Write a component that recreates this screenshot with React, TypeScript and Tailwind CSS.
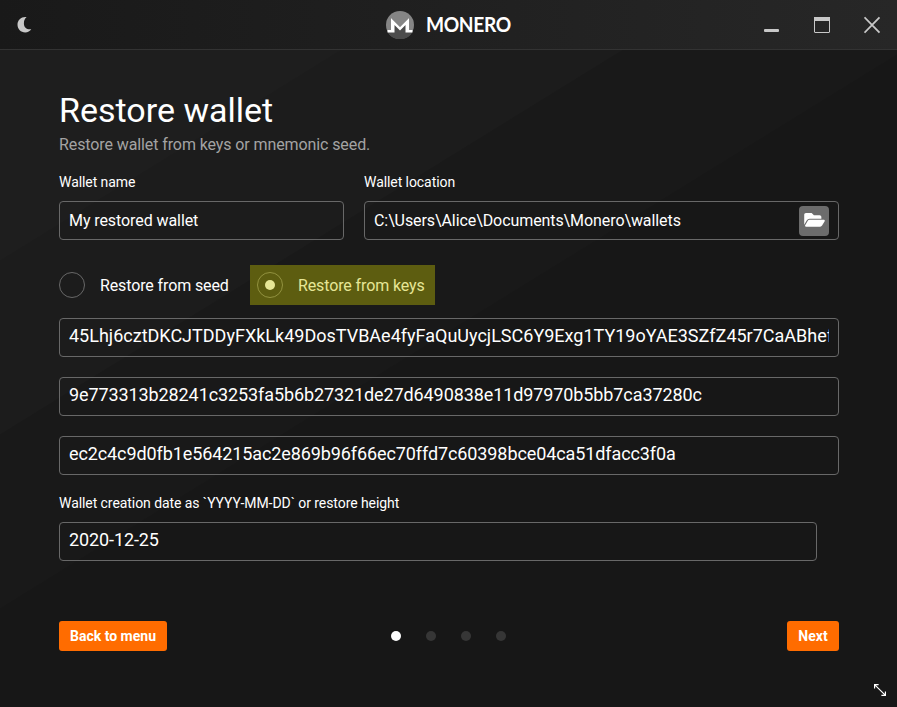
import type { ReactNode } from "react";

function Field({ children, className = "" }: { children: ReactNode; className?: string }) {
  return (
    <div className={`flex h-[39px] items-center rounded-[4px] border border-[#686868] px-[9px] text-white ${className}`}>
      {children}
    </div>
  );
}

function KeyField({ value, className = "", tracking = "tracking-[-0.1px]" }: { value: string; className?: string; tracking?: string }) {
  return (
    <Field className={className}>
      <span className={`block w-full overflow-hidden pb-[3px] text-[18px] leading-[24px] whitespace-nowrap ${tracking}`}>{value}</span>
    </Field>
  );
}

function Label({ children }: { children: ReactNode }) {
  return <div className="text-[14px] leading-5 tracking-[-0.07px] text-white">{children}</div>;
}

function TitleBar() {
  return (
    <header className="flex h-[50px] shrink-0 items-center justify-between border-b border-[#333333] bg-linear-to-r from-[#191919] via-[#202020] to-[#272727]">
      <div className="flex w-[300px] pl-[17px]">
        <svg width="16" height="17" viewBox="0 0 16 17" fill="#c8c8c8">
          <path d="M9.600 1.100C4.500 0.400 0.500 4 0.500 8.700c0 4.400 3.400 7.700 7.700 7.700 2.600 0 4.800-1.200 6.100-3.200C10 13.900 6.900 11.500 6.900 7.400 6.900 4.600 7.800 2.600 9.600 1.100z" />
        </svg>
      </div>
      <div className="flex items-center">
        <svg width="28" height="28" viewBox="0 0 28 28" className="ml-[1px]">
          <circle cx="14" cy="14" r="14" fill="#858585" />
          <path d="M1.700 21h24.600A14 14 0 0 1 1.700 21z" fill="#4c4c4c" />
          <path d="M5 21V7l9 9 9-9v14z" fill="#4c4c4c" />
          <path d="M1.500 21.500V19H5V7l9 9 9-9v12h3.500v2.500h-7V14L14 19.500 8.500 14v7.500z" fill="#ffffff" />
        </svg>
        <span className="mb-[1px] ml-[12px] w-[86px] origin-left scale-x-[0.935] font-['Lato'] text-[20.500px] leading-[28px] font-bold tracking-[-0.4px] text-white">MONERO</span>
      </div>
      <div className="flex w-[300px] items-center justify-end gap-[33px] pr-[16px]">
        <svg width="16" height="18" viewBox="0 0 16 18">
          <rect x="0" y="13" width="15" height="3" rx="1" fill="#c8c8c8" />
        </svg>
        <svg width="18" height="18" viewBox="0 0 18 18">
          <rect x="1.500" y="1.500" width="15" height="15" rx="0.500" fill="none" stroke="#c8c8c8" />
          <path d="M1 1h16v4H1z" fill="#c8c8c8" />
        </svg>
        <svg width="17" height="18" viewBox="0 0 17 18" stroke="#c8c8c8" strokeWidth="1.800">
          <path d="M0.500 1.300l15 15.400M15.500 1.300L0.500 16.700" />
        </svg>
      </div>
    </header>
  );
}

export default function App() {
  return (
    <div className="relative flex h-[707px] w-[897px] flex-col overflow-hidden bg-[linear-gradient(148.3deg,#1e1e1e_0px,#1e1e1e_221px,#1c1c1c_222px,#1c1c1c_369px,#191919_370px,#191919_517px,#171717_518px)] font-['Roboto',sans-serif]">
      <TitleBar />
      <main className="flex flex-1 flex-col pt-[39px] pr-[58px] pl-[59px]">
        <h1 className="text-[34px] leading-[42px] font-normal text-white">Restore wallet</h1>
        <p className="mt-1 text-[16px] leading-5 tracking-[-0.1px] text-[#a3a3a3]">Restore wallet from keys or mnemonic seed.</p>

        <div className="mt-[17px] flex gap-5">
          <div className="w-[285px]">
            <Label>Wallet name</Label>
            <Field className="mt-[9px] text-[16px] tracking-[-0.08px]">My restored wallet</Field>
          </div>
          <div className="w-[475px]">
            <Label>Wallet location</Label>
            <Field className="mt-[9px] justify-between text-[16px] tracking-[-0.08px]">
              <span>C:\Users\Alice\Documents\Monero\wallets</span>
              <button className="flex h-[30px] w-[30px] items-center justify-center rounded-[4px] bg-[#6c6c6c]">
                <svg width="21" height="16" viewBox="0 0 576 448" fill="#ffffff">
                  <path d="M572.700 228.100L500.300 352.200A64 64 0 0 1 445 384H45c-18.500 0-30.100-20.100-20.700-36.100l72.400-124.200A64 64 0 0 1 152 192h400c18.500 0 30.100 20.100 20.700 36.100zM152 160h328v-48c0-26.500-21.500-48-48-48H272L208 0H48C21.500 0 0 21.500 0 48v278l69.100-118.400A96.200 96.200 0 0 1 152 160z" />
                </svg>
              </button>
            </Field>
          </div>
        </div>

        <div className="mt-[25px] flex h-10 items-center text-[16px] tracking-[-0.12px] text-white">
          <span className="h-[26px] w-[26px] rounded-full border border-[#686868]" />
          <span className="ml-[15px] w-[150px] pt-[2px]">Restore from seed</span>
          <div className="flex h-10 w-[185px] items-center bg-[#5d5d10] pl-[7px] text-[#e6e696]">
            <span className="flex h-[26px] w-[26px] items-center justify-center rounded-full border border-[#92923f]">
              <span className="h-[10px] w-[10px] rounded-full bg-[#e6e696]" />
            </span>
            <span className="ml-[15px] pt-[2px]">Restore from keys</span>
          </div>
        </div>

        <KeyField className="mt-[13px]" tracking="tracking-[0.005px]" value="45Lhj6cztDKCJTDDyFXkLk49DosTVBAe4fyFaQuUycjLSC6Y9Exg1TY19oYAE3SZfZ45r7CaABhef" />
        <KeyField className="mt-5" value="9e773313b28241c3253fa5b6b27321de27d6490838e11d97970b5bb7ca37280c" />
        <KeyField className="mt-5" value="ec2c4c9d0fb1e564215ac2e869b96f66ec70ffd7c60398bce04ca51dfacc3f0a" />

        <div className="mt-[18px] w-[758px]">
          <Label>Wallet creation date as `YYYY-MM-DD` or restore height</Label>
          <KeyField className="mt-[9px]" value="2020-12-25" />
        </div>

        <div className="mt-[60px] flex h-[30px] items-center justify-between text-[14px] font-bold text-white">
          <button className="h-[30px] w-[108px] rounded-[3px] bg-[#ff6c00]">Back to menu</button>
          <div className="mr-[58px] flex flex-1 justify-center gap-[25px]">
            <span className="h-[10px] w-[10px] rounded-full bg-white" />
            <span className="h-[10px] w-[10px] rounded-full bg-[#363636]" />
            <span className="h-[10px] w-[10px] rounded-full bg-[#363636]" />
            <span className="h-[10px] w-[10px] rounded-full bg-[#363636]" />
          </div>
          <button className="h-[30px] w-[52px] rounded-[3px] bg-[#ff6c00]">Next</button>
        </div>
      </main>
      <svg className="absolute right-[11px] bottom-[11px]" width="12" height="12" viewBox="0 0 13 13" fill="none" stroke="#ffffff" strokeWidth="1.300">
        <path d="M0.600 5V0.600h4.400M12.400 8v4.400H8M0.600 0.600l11.800 11.800" />
      </svg>
    </div>
  );
}
